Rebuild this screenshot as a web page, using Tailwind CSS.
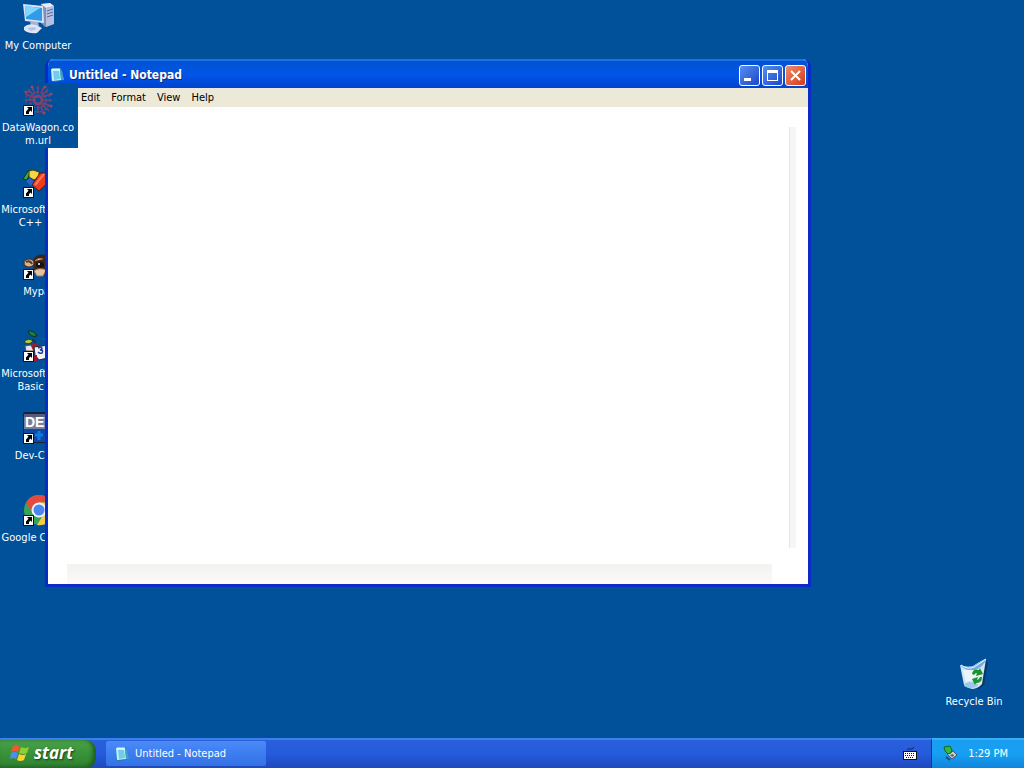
<!DOCTYPE html>
<html lang="en">
<head>
    <meta charset="UTF-8">
    <meta name="viewport" content="width=device-width, initial-scale=1.0">
    <script src="https://cdn.jsdelivr.net/npm/@tailwindcss/browser@4"></script>
    <title>Untitled - Notepad</title>
</head>
<body class="h-screen flex flex-col overflow-hidden bg-[#00509a] font-[Tahoma,'DejaVu_Sans_Condensed','DejaVu_Sans',sans-serif] text-[11px] leading-[13px]">

    <!-- shared symbols -->
    <svg class="hidden">
        <symbol id="shortcut" viewBox="0 0 11 11">
            <rect x="0.5" y="0.5" width="10" height="10" fill="#fff" stroke="#111"/>
            <path d="M4 2h5v5L7.500 5.500 6 7v2H3V6.500L5.500 3.700z" fill="#000"/>
        </symbol>
        <symbol id="notepad" viewBox="0 0 16 16">
            <path d="M3 2l9-1 3 12-9 2-4-1z" fill="#2878a8"/>
            <path d="M2 2h9l1 11-9 1z" fill="#c5f3fb"/>
            <path d="M4 4h6l1 8-6 1z" fill="#6fcdeb"/>
            <path d="M11 2l1 11 3 0-2-9z" fill="#3fa2cd"/>
            <path d="M3 2h8" stroke="#e8ffff"/>
        </symbol>
    </svg>

    <main class="relative flex-1">

        <ul class="w-[78px] pt-[1px] text-white text-center">
            <li class="h-[82px] flex flex-col items-center gap-[5px] pr-[2px] pt-[1px]">
                <svg class="w-8 h-8 shrink-0" viewBox="0 0 32 32">
                    <path d="M19 2l9-1 4 3v18l-9 3-4-4z" fill="#7c8fbd"/>
                    <path d="M19 2l9-1 4 3-8 2z" fill="#e8ecf8"/>
                    <path d="M24 6l8-2v18l-8 3z" fill="#b5c0df"/>
                    <path d="M25 9l6-2M25 12l6-2M25 15l6-2" stroke="#586a9d"/>
                    <path d="M1 2l20 2 1 17-19-2z" fill="#dce5f5"/>
                    <path d="M3 4l17 2v13L4 17z" fill="#2f9be9"/>
                    <path d="M3 4l15 2L4 15z" fill="#83d6ff"/>
                    <path d="M8 19l8 1 1 4-8 1z" fill="#a6b3d5"/>
                    <path d="M2 25q4-4 12-2l6 3-5 5q-8 1-13-3z" fill="#dfe5f4"/>
                    <path d="M5 26l7-1 3 2-6 2z" fill="#b7c3df"/>
                </svg>
                <span>My Computer</span>
            </li>
            <li class="relative z-20 h-[82px]">
                <div class="h-[65px] flex flex-col items-center gap-[5px] pr-[2px] pt-[1px] bg-[#00509a]">
                    <svg class="w-8 h-8 shrink-0" viewBox="0 0 32 32">
                        <g fill="none" stroke="#7d4370" stroke-width="1.500">
                            <circle cx="16" cy="16" r="4" stroke-width="3"/>
                            <circle cx="16" cy="16" r="8" stroke-dasharray="3 2"/>
                            <circle cx="16" cy="16" r="12" stroke-dasharray="2 3"/>
                            <path d="M16 2v8M16 22v7M3 16h8M21 16h9M6 5l6 7M26 5l-6 7M20 20l7 7M10 3l3 7M22 3l-3 7M3 10l8 3M29 10l-8 3M29 22l-8-3M21 29l-2-7"/>
                        </g>
                        <g fill="#94496a"><circle cx="4" cy="8" r="1.500"/><circle cx="10" cy="3" r="1.500"/><circle cx="23" cy="3" r="1.500"/><circle cx="29" cy="10" r="1.500"/><circle cx="29" cy="22" r="1.500"/><circle cx="22" cy="29" r="1.500"/></g>
                        <use href="#shortcut" x="1" y="21" width="11" height="11"/>
                    </svg>
                    <span>DataWagon.co<br>m.url</span>
                </div>
            </li>
            <li class="h-[82px] flex flex-col items-center gap-[5px] pr-[2px] pt-[1px]">
                <svg class="w-8 h-8 shrink-0" viewBox="0 0 32 32">
                    <path d="M1 13l5-8 3 0-4 9z" fill="#25b54a" stroke="#0b2c20"/>
                    <path d="M7 5l4-1 6 2v5l-5 3-5-3z" fill="#f7d545" stroke="#4d4100"/>
                    <path d="M4 15l4-3 4 4-3 4z" fill="#2f61c9"/>
                    <path d="M10 19l8-12h11l2 5-14 13z" fill="#ed3b1d" stroke="#5f120a"/>
                    <path d="M13 19l9-11" stroke="#ff7955" stroke-width="2"/>
                    <use href="#shortcut" x="1" y="21" width="11" height="11"/>
                </svg>
                <span class="pl-1 whitespace-nowrap">Microsoft Visual<br>C++ 6.0</span>
            </li>
            <li class="h-[82px] flex flex-col items-center gap-[5px] pr-[2px] pt-[1px]">
                <svg class="w-8 h-8 shrink-0" viewBox="0 0 32 32">
                    <path d="M11 12q4-7 13-5 8 3 7 13-2 9-11 8-10-2-9-16z" fill="#3c2419"/>
                    <ellipse cx="7" cy="15" rx="5" ry="4" fill="#d9b18d" stroke="#4a2b1b"/>
                    <path d="M4 14q4-2 6 2" fill="none" stroke="#5a3825" stroke-width="2"/>
                    <path d="M13 13q3-4 8-2M12 23q5-4 12-1l-3 6h-6z" fill="#e4c3a3" stroke="#a67556"/>
                    <ellipse cx="18" cy="17" rx="4" ry="3" fill="#181010"/>
                    <circle cx="17" cy="16" r="1" fill="#fff"/>
                    <use href="#shortcut" x="1" y="21" width="11" height="11"/>
                </svg>
                <span>Mypal</span>
            </li>
            <li class="h-[82px] flex flex-col items-center gap-[5px] pr-[2px] pt-[1px]">
                <svg class="w-8 h-8 shrink-0" viewBox="0 0 32 32">
                    <path d="M6 1q6-1 9 5-7 2-9-5z" fill="#247a3c" stroke="#08331c"/>
                    <path d="M2 12q4-5 9-1-4 5-9 1z" fill="#a8c940" stroke="#2d4410"/>
                    <path d="M10 10q3-1 3 4" fill="none" stroke="#16241a"/>
                    <path d="M3 16l6-1 3 6H4z" fill="#ece4e8" stroke="#655"/>
                    <path d="M9 15l4-2 5 3v6h-6z" fill="#a91731"/>
                    <path d="M12 17l15-2 3 12-13 3-4-5z" fill="#f3f2fa" stroke="#223"/>
                    <path d="M16 18q4-2 4 1l-2 1q4 0 2 3-2 1-4-1" fill="none" stroke="#1c3d9c" stroke-width="1.500"/>
                    <path d="M11 25h4v6h-4z" fill="#9d1630"/>
                    <use href="#shortcut" x="1" y="21" width="11" height="11"/>
                </svg>
                <span class="pl-1 whitespace-nowrap">Microsoft Visual<br>Basic 6.0</span>
            </li>
            <li class="h-[82px] flex flex-col items-center gap-[5px] pr-[2px] pt-[1px]">
                <svg class="w-8 h-8 shrink-0" viewBox="0 0 32 32">
                    <rect x="1" y="0" width="30" height="31" rx="2" fill="#14233f"/>
                    <rect x="2" y="2" width="28" height="15" fill="#76809f"/>
                    <rect x="2" y="2" width="28" height="3" fill="#565d7c"/>
                    <rect x="2" y="17" width="28" height="13" fill="#0b4ba3"/>
                    <path d="M17 19v9M13 23h8" stroke="#1279e0" stroke-width="3"/>
                    <text x="3" y="15" font-family="Liberation Sans" font-weight="700" font-size="14" fill="#fff">DEV</text>
                    <use href="#shortcut" x="1" y="21" width="11" height="11"/>
                </svg>
                <span>Dev-C++</span>
            </li>
            <li class="h-[82px] flex flex-col items-center gap-[5px] pr-[2px] pt-[1px]">
                <svg class="w-8 h-8 shrink-0" viewBox="0 0 32 32">
                    <circle cx="17" cy="16" r="15" fill="#39a257"/>
                    <path d="M4 8.500A15 15 0 0 1 30 8.500H17L10.500 19z" fill="#e34b3e"/>
                    <path d="M30 8.500A15 15 0 0 1 15 31l7-11.500L17 8.500z" fill="#f5cd45"/>
                    <circle cx="17" cy="16" r="7.500" fill="#eef3fb"/>
                    <circle cx="17" cy="16" r="5.500" fill="#4a87ee"/>
                    <use href="#shortcut" x="1" y="21" width="11" height="11"/>
                </svg>
                <span class="pl-1 whitespace-nowrap">Google Chrome</span>
            </li>
        </ul>

        <!-- recycle bin -->
        <div class="absolute right-[10px] bottom-[30px] w-20 flex flex-col items-center gap-[5px] text-white text-center">
            <svg class="w-8 h-8" viewBox="0 0 32 32">
                <path d="M27 2l3 2-4 23-5 4-3-1z" fill="#0b3766"/>
                <path d="M2 7q7 3 13 1 9-6 13-7l-4 25q-3 4-9 5-6-1-9-4z" fill="#d3e6f6"/>
                <path d="M2 7q7 3 13 1 9-6 13-7-2 8-11 11Q8 14 2 7z" fill="#76aee0"/>
                <path d="M3 7q7 5 13 2 8-5 12-8" fill="none" stroke="#f2fbff"/>
                <path d="M5 12l3 12q6-4 13 2l3-14" fill="#eaf4fb"/>
                <ellipse cx="13" cy="27" rx="7" ry="3" fill="#9cc6ea"/>
                <path d="M14 16q1-6 7-4l1-2 3 6-7 2 1-3q-2 0-3 2zM24 19q0 6-6 6l-1 2-3-6 6-2-1 3q2 0 3-3z" fill="#17942a"/>
            </svg>
            <span>Recycle Bin</span>
        </div>

        <!-- notepad window -->
        <section class="absolute z-10 left-[45px] right-[213px] top-[59px] bottom-[151px] flex flex-col rounded-t-lg overflow-hidden border-x-[3px] border-b-[3px] border-[#0a2bc6] bg-white">
            <header class="h-[29px] shrink-0 -mx-[3px] pl-[4px] pr-[5px] pt-[1px] flex items-center bg-linear-to-b from-[#0054cf] via-[#0055e8] to-[#0043d0] border-t-2 border-[#1c70ee]">
                <svg class="w-4 h-4" viewBox="0 0 16 16"><use href="#notepad"/></svg>
                <h1 class="ml-1 flex-1 text-white text-[12px] leading-4 font-bold [text-shadow:1px_1px_#0a2a80]">Untitled - Notepad</h1>
                <div class="flex gap-[2px]">
                    <button class="w-[21px] h-[21px] rounded-[3px] border border-white bg-linear-to-br from-[#5b8df0] to-[#1a46c8]" aria-label="Minimize">
                        <svg class="w-[19px] h-[19px]" viewBox="0 0 19 19"><path d="M4 12h7v3H4z" fill="#fff"/></svg>
                    </button>
                    <button class="w-[21px] h-[21px] rounded-[3px] border border-white bg-linear-to-br from-[#5b8df0] to-[#1a46c8]" aria-label="Maximize">
                        <svg class="w-[19px] h-[19px]" viewBox="0 0 19 19"><path d="M4 4h11v11H4zM5 7v7h9V7z" fill="#fff" fill-rule="evenodd"/></svg>
                    </button>
                    <button class="w-[21px] h-[21px] rounded-[3px] border border-white bg-linear-to-br from-[#ef8a6c] to-[#cf3a12]" aria-label="Close">
                        <svg class="w-[19px] h-[19px]" viewBox="0 0 19 19"><path d="M5 5l9 9M14 5l-9 9" stroke="#fff" stroke-width="2"/></svg>
                    </button>
                </div>
            </header>
            <nav class="h-[19px] shrink-0 pl-[7px] flex items-center gap-[11px] bg-[#ece9d8] text-black">
                <button class="w-[15px]">File</button>
                <button>Edit</button>
                <button>Format</button>
                <button>View</button>
                <button>Help</button>
            </nav>
            <div class="flex-1 flex pt-5">
                <textarea class="flex-1 resize-none outline-none" aria-label="Text"></textarea>
                <div class="w-[7px] mr-3 bg-[#f6f6f4] border-l border-[#e6e6e4]"></div>
            </div>
            <div class="h-5 mt-4 ml-[19px] mr-9 bg-linear-to-b from-[#f2f2f0] to-[#fafaf8]"></div>
        </section>
    </main>

    <!-- taskbar -->
    <footer class="h-[30px] shrink-0 flex text-white bg-linear-to-b from-[#2b5fdb] via-[#245bdc] to-[#1f48bd] border-t-2 border-[#3a80ee]">
        <button class="w-24 pl-[10px] pb-[2px] flex items-center gap-1 rounded-r-[10px] bg-linear-to-b from-[#4aa04a] via-[#389238] to-[#2f8030] shadow-[inset_-3px_-1px_4px_#1c5c20] text-[17px] leading-5 font-bold italic font-[Trebuchet_MS,'Open_Sans',sans-serif] [text-shadow:1px_1px_2px_#123d14]">
            <svg class="w-5 h-5" viewBox="0 0 20 20">
                <path d="M3 3q4-2 7 0L8 9Q5 7 1 9z" fill="#ee5a2b"/>
                <path d="M11 4q4 2 8 0l-2 6q-4 2-8 0z" fill="#8bd030"/>
                <path d="M1 10q4-2 7 0l-2 6q-3-2-6 0z" fill="#4c8df0"/>
                <path d="M9 11q4 2 7 0l-2 6q-4 2-7 0z" fill="#fbd035"/>
            </svg>
            start
        </button>
        <button class="w-40 ml-[10px] mt-[1px] mb-[2px] pl-2 flex items-center gap-[5px] rounded-[2px] bg-linear-to-b from-[#4b8bf7] via-[#3c7df0] to-[#3472e6]">
            <svg class="w-4 h-4" viewBox="0 0 16 16"><use href="#notepad"/></svg>
            Untitled - Notepad
        </button>
        <div class="ml-auto pr-[14px] flex items-center">
            <svg class="w-[14px] h-[14px]" viewBox="0 0 14 14">
                <path d="M4 3q1-2 3-1t4-2" fill="none" stroke="#142253"/>
                <rect x="0.500" y="4.500" width="13" height="8" fill="#fff" stroke="#111"/>
                <path d="M2 6.500h10M2 8.500h10M3 10.500h8" stroke="#111" stroke-dasharray="1 1"/>
            </svg>
        </div>
        <div class="-mt-[2px] pl-[10px] pr-4 pb-[2px] flex items-center gap-[10px] bg-linear-to-b from-[#1a9df0] via-[#16a0f2] to-[#1184dc] border-l border-[#0a3c9e] border-t-2 border-t-[#35b0f5]">
            <svg class="w-4 h-4" viewBox="0 0 16 16">
                <path d="M5 9l6-3 4 4-5 4z" fill="#c9ced6" stroke="#4a5260"/>
                <path d="M8 10l3-1 1 2-2 1z" fill="#5b6470"/>
                <path d="M2 2l6-1 2 4-1 3-3 1-3-3z" fill="#31b83e" stroke="#12682a"/>
                <path d="M4 12l4 3" stroke="#31486d" stroke-width="2"/>
            </svg>
            <time>1:29 PM</time>
        </div>
    </footer>

</body>
</html>
